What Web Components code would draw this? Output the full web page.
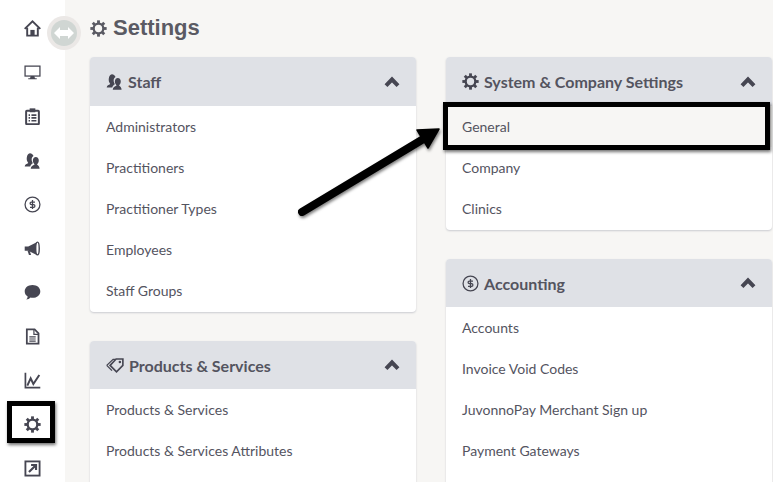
<!DOCTYPE html>
<html lang="en"><head><meta charset="utf-8"><title>Settings</title>
<style>
html,body{margin:0;padding:0;height:482px;overflow:hidden;background:#f7f6f4}
body{font-family:Lato,"Liberation Sans",sans-serif;color:#54545f}
</style></head><body>
<app-shell>
  <app-sidebar slot="side">
    <side-item icon="home"></side-item>
    <side-item icon="monitor"></side-item>
    <side-item icon="clipboard"></side-item>
    <side-item icon="users"></side-item>
    <side-item icon="dollar"></side-item>
    <side-item icon="megaphone"></side-item>
    <side-item icon="bubble"></side-item>
    <side-item icon="doc"></side-item>
    <side-item icon="chart"></side-item>
    <side-item icon="gear"></side-item>
    <side-item icon="external"></side-item>
  </app-sidebar>
  <page-title>Settings</page-title>
  <card-grid>
    <card-column>
      <settings-card icon="users" heading="Staff">
        <card-row>Administrators</card-row><card-row>Practitioners</card-row><card-row>Practitioner Types</card-row><card-row>Employees</card-row><card-row>Staff Groups</card-row>
      </settings-card>
      <settings-card compact icon="tag" size="18" heading="Products &amp; Services">
        <card-row>Products &amp; Services</card-row><card-row>Products &amp; Services Attributes</card-row><card-row></card-row>
      </settings-card>
    </card-column>
    <card-column>
      <settings-card icon="gear" heading="System &amp; Company Settings">
        <card-row active>General</card-row><card-row>Company</card-row><card-row>Clinics</card-row>
      </settings-card>
      <settings-card compact icon="dollar" heading="Accounting">
        <card-row>Accounts</card-row><card-row>Invoice Void Codes</card-row><card-row>JuvonnoPay Merchant Sign up</card-row><card-row>Payment Gateways</card-row><card-row></card-row>
      </settings-card>
    </card-column>
  </card-grid>
  <screen-annotations slot="over"></screen-annotations>
</app-shell>
<script>
const gearRays=[0,45,90,135,180,225,270,315].map(a=>`<rect x="10" y="0.500" width="4" height="5" transform="rotate(${a} 12 12)" fill="currentColor"/>`).join('');
const ICONS={
 home:`<path d="M1 12.500 12 2l11 10.500M4.500 11v11h15V11" fill="none" stroke="currentColor" stroke-width="2.700"/><rect x="9" y="14" width="6" height="8" fill="currentColor"/>`,
 monitor:`<rect x="1.500" y="3" width="21" height="14" fill="#fff" stroke="currentColor" stroke-width="1.800"/><path d="M9.500 17h5l1 3h2.500v1.500H6V20h2.500z" fill="currentColor"/>`,
 clipboard:`<rect x="3" y="4" width="18" height="19" rx="1" fill="none" stroke="currentColor" stroke-width="2.800"/><rect x="8" y="0.500" width="8" height="5.500" fill="currentColor"/><path d="M6.500 10h2M6.500 14h2M6.500 18h2M10.500 10h7M10.500 14h7M10.500 18h7" stroke="currentColor" stroke-width="2.400"/>`,
 users:`<path d="M1 20.500c0-3 3-3.500 5-5-2-2.500-2.500-5-2-8C4.600 3.500 7 1.500 9.500 2c2 .4 3.500 1.700 3.900 3.800-2.700 1.300-3.500 5-1.600 8.700l.8 1.300c-2 1-3.300 2.700-3.800 4.700z" fill="currentColor"/><path d="M9.500 23.500c0-3.500 3-4.500 5.500-6-2-2-2.700-4-2.400-6.500.3-2.500 2-4 4.100-4s3.800 1.500 4.100 4c.3 2.500-.4 4.500-2.400 6.500 1.500 1.300 3.600 2.500 3.600 6z" fill="currentColor"/>`,
 dollar:`<circle cx="12" cy="12" r="10.500" fill="none" stroke="currentColor" stroke-width="1.800"/><path d="M15.500 8.500H10.500a1.900 1.900 0 0 0 0 3.800h3a1.900 1.900 0 0 1 0 3.800H8.500M12 5.500v13" fill="none" stroke="currentColor" stroke-width="1.800"/>`,
 megaphone:`<path d="M1 9h5v6H1zM6 9l12-6v18L6 15z" fill="currentColor"/><path d="M5 15l2 6h3l-2-6z" fill="currentColor"/><ellipse cx="19" cy="12" rx="2.500" ry="9" fill="#fff" stroke="currentColor" stroke-width="2"/>`,
 bubble:`<path d="M12 1.500C5.500 1.500 1 5.500 1 10.500c0 3 1.600 5.500 4.200 7-.2 1.800-.8 3.300-2 4.500 2.500 0 4.500-1.200 6-2.800 1 .2 1.900.300 2.800.300 6.500 0 11-4 11-9s-4.500-9-11-9z" fill="currentColor"/>`,
 doc:`<path d="M4 2h11l5.500 5.500V22H4z" fill="none" stroke="currentColor" stroke-width="2.500"/><path d="M14 2v7h7M7.500 12.500h9M7.500 15.500h9M7.500 18.500h9" fill="none" stroke="currentColor" stroke-width="1.700"/>`,
 chart:`<path d="M2 1v21h21" fill="none" stroke="currentColor" stroke-width="2.400"/><path d="M4.700 19.300 9.400 9l3.800 8 8.400-12.800" fill="none" stroke="currentColor" stroke-width="2.800"/>`,
 gear:`<circle cx="12" cy="12" r="6.800" fill="none" stroke="currentColor" stroke-width="3.200"/>${gearRays}`,
 external:`<rect x="2" y="2" width="20" height="20" fill="none" stroke="currentColor" stroke-width="2.600"/><path d="M7 17 16 8M10 7h7v7" fill="none" stroke="currentColor" stroke-width="3"/>`,
 tag:`<path d="M1 12.500 9.500 4.500h3" fill="none" stroke="currentColor" stroke-width="1.800"/><path d="M8 19.500 1 12.500" fill="none" stroke="currentColor" stroke-width="1.800"/><path d="M5.500 12.500 13.500 4h9V12.500L14 21z" fill="none" stroke="currentColor" stroke-width="2.200"/><circle cx="18.500" cy="8" r="1.700" fill="currentColor"/>`
};
function svg(name,size){return `<svg xmlns="http://www.w3.org/2000/svg" viewBox="0 0 24 24" width="${size}" height="${size}" aria-hidden="true">${ICONS[name]}</svg>`;}
function def(tag,css,html){
  customElements.define(tag,class extends HTMLElement{
    constructor(){super();this.attachShadow({mode:'open'});}
    connectedCallback(){this.shadowRoot.innerHTML=`<style>${css}</style>${typeof html==='function'?html(this):html}`;}
  });
}
def('app-shell',`:host{display:grid;grid-template-columns:65px 1fr;height:482px;overflow:hidden;position:relative}
 .main{padding:0 0 0 25px;min-width:0;overflow:hidden;height:482px}
 .side{grid-row:1}`,
 `<div class="side"><slot name="side"></slot></div><div class="main"><slot></slot></div><slot name="over"></slot>`);
def('app-sidebar',`:host{display:flex;flex-direction:column;align-items:center;background:#fff;height:482px;padding-top:6px;box-sizing:border-box;color:#464652}`,`<slot></slot>`);
def('side-item',`:host{display:flex;flex:none;width:65px;height:44px;align-items:center;justify-content:center;color:#464652}`,e=>svg(e.getAttribute('icon'),17));
def('page-title',`:host{display:flex;align-items:center;gap:6px;height:57px;box-sizing:border-box;padding-bottom:1px;font:bold 22px "Liberation Sans",Arial,sans-serif;color:#5a5a63}svg{display:block;color:#5a5a63}`,()=>svg('gear',17)+`<slot></slot>`);
def('card-grid',`:host{display:grid;grid-template-columns:326px 326px;column-gap:30px;align-items:start}`,`<slot></slot>`);
def('card-column',`:host{display:flex;flex-direction:column;gap:29px}`,`<slot></slot>`);
def('settings-card',`:host{display:block;background:#fff;border-radius:4px;box-shadow:0 1px 2px rgba(90,95,120,.28);overflow:hidden}
 header{display:flex;align-items:center;height:49px;box-sizing:border-box;padding:0 16px;background:#dfe1e6;font:bold 16px Lato,sans-serif;color:#54545f;gap:5px}
 :host([compact]) header{height:48px}
 header span{flex:1}
 .ic{display:block;color:#464652}
 .chev{display:block}
 .body{padding-bottom:1px}`,
 e=>`<header>${svg(e.getAttribute('icon'),e.getAttribute('size')||17).replace('<svg','<svg class="ic"')}<span>${e.getAttribute('heading').replace(/&/g,'&amp;')}</span><svg class="chev" viewBox="0 0 16 12" width="16" height="12" aria-hidden="true"><path d="M2 9.700 8 3.500l6 6.200" fill="none" stroke="#464652" stroke-width="4"/></svg></header><div class="body"><slot></slot></div>`);
def('card-row',`:host{display:flex;align-items:center;height:41px;padding:0 16px;font:14px Lato,sans-serif;color:#54545f}
 :host([active]){background:#f7f6f4}`,`<slot></slot>`);
def('screen-annotations',`:host{display:block;position:absolute;inset:0;pointer-events:none}
 .toggle{position:absolute;left:47px;top:16px;width:34px;height:34px;border-radius:50%;background:#ebe8e6;display:flex;align-items:center;justify-content:center}
 .toggle i{display:flex;width:26px;height:26px;border-radius:50%;background:#d0d6d3;align-items:center;justify-content:center}
 .box{position:absolute;box-sizing:border-box;border:5px solid #000;box-shadow:1px 2px 3px rgba(0,0,0,.55)}
 .a{left:7px;top:401px;width:48px;height:42px}
 .b{left:443px;top:102px;width:327px;height:48px}
 .arrow{position:absolute;left:0;top:0;filter:drop-shadow(1px 2px 1.500px rgba(0,0,0,.5))}`,
 `<div class="toggle"><i><svg viewBox="0 0 20 12" width="20" height="12" aria-hidden="true"><path d="M0 6 6 0v3h8V0l6 6-6 6V9H6v3z" fill="#fff"/></svg></i></div>
  <div class="box a"></div><div class="box b"></div>
  <svg class="arrow" width="773" height="482" aria-hidden="true"><path d="M302 212 425 138" stroke="#000" stroke-width="8" stroke-linecap="round" fill="none"/><path d="M417 130 439 129 428 148z" fill="#000" stroke="#000" stroke-width="1.500" stroke-linejoin="round"/></svg>`);
</script>
</body></html>
